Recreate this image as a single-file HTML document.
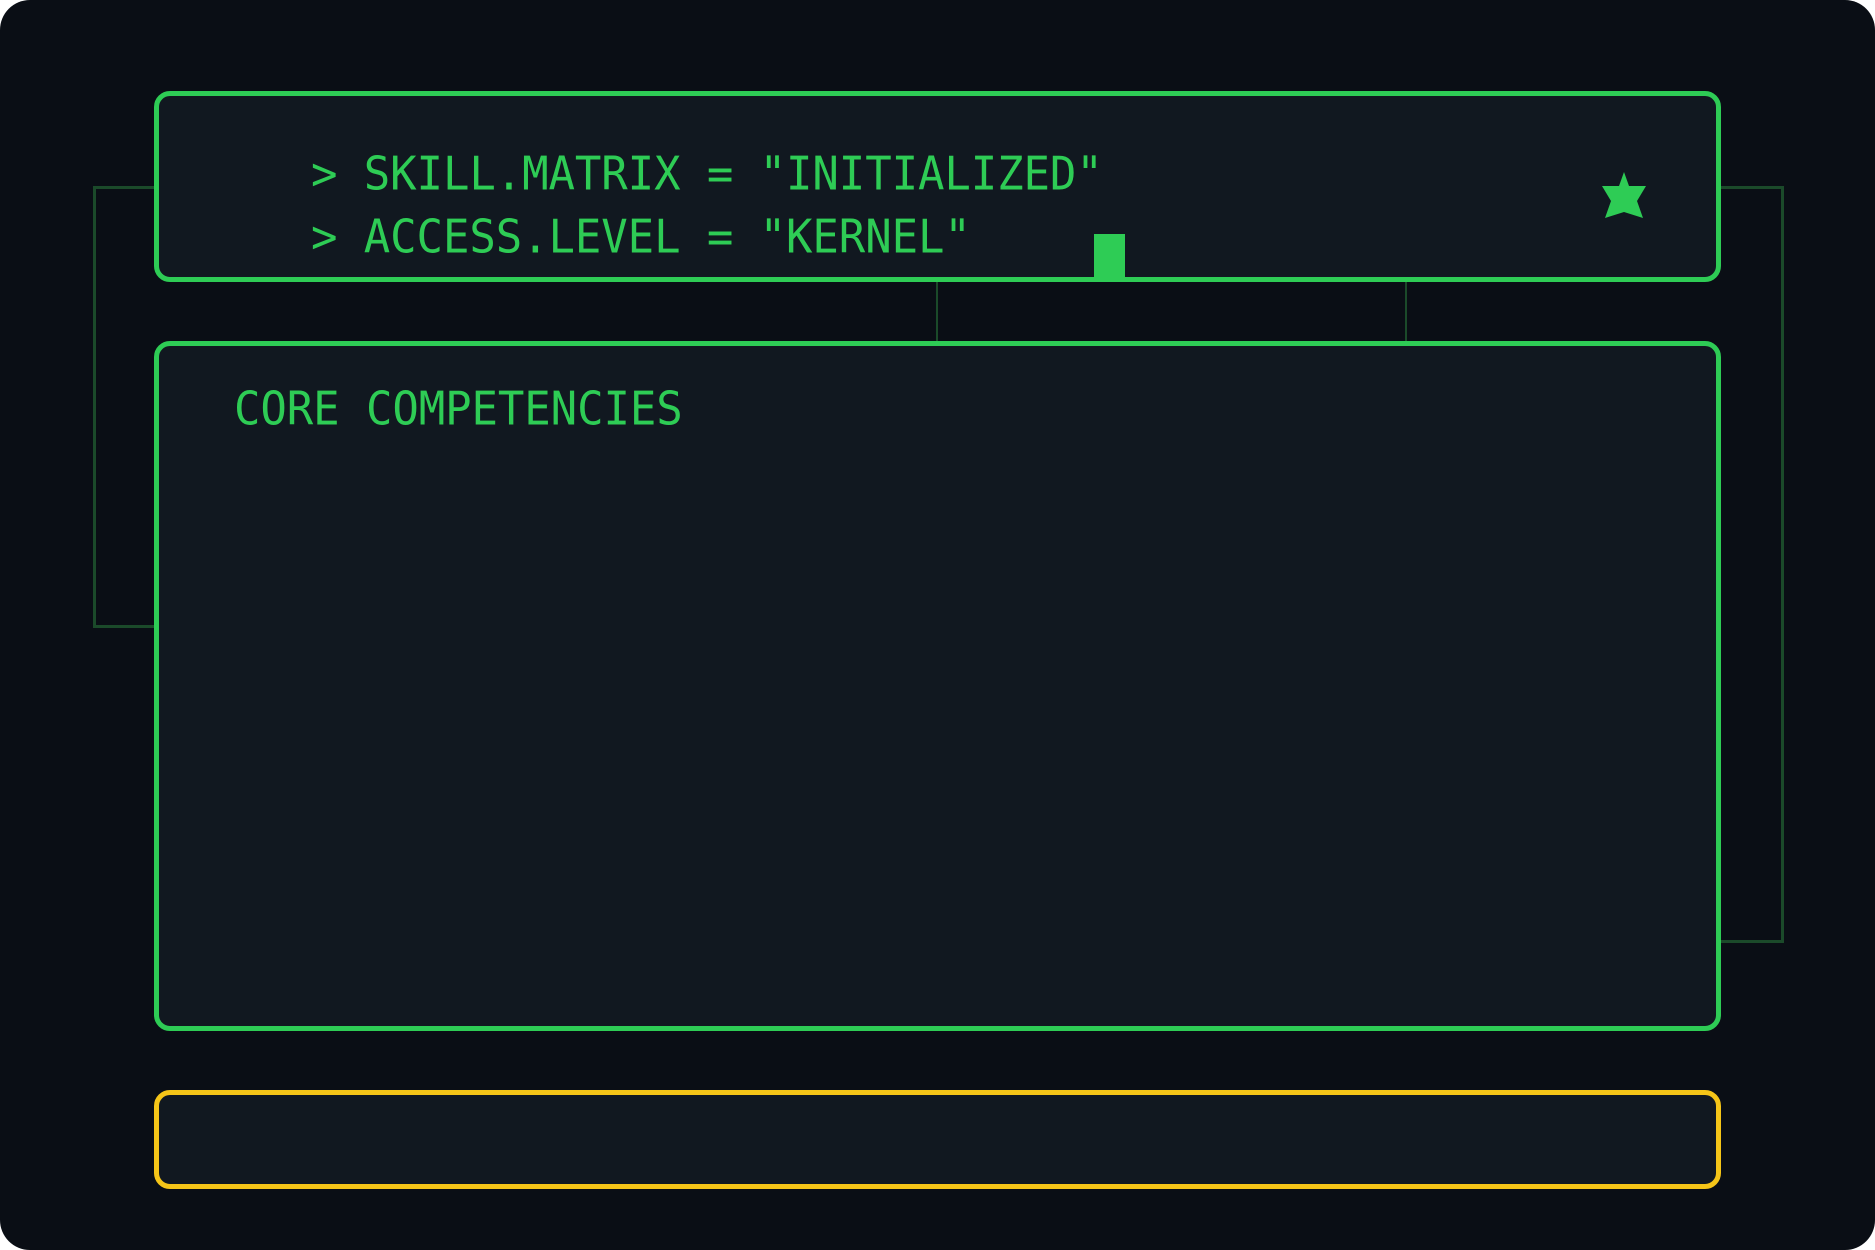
<!DOCTYPE html>
<html><head><meta charset="utf-8"><style>
html,body{margin:0;padding:0;background:#fff;}
body{width:1875px;height:1250px;overflow:hidden;position:relative;}
.bg{position:absolute;left:0;top:0;width:1875px;height:1250px;background:#0a0e15;border-radius:30px;}
.box{position:absolute;box-sizing:border-box;background:#111820;border:5px solid #2ecc55;border-radius:16px;}
.t{position:absolute;font-family:"DejaVu Sans Mono","Liberation Mono",monospace;font-size:44px;color:#2ecc55;white-space:pre;line-height:1;transform-origin:0 100%;transform:scaleY(1.06);letter-spacing:-0.1px;}
.ln{position:absolute;border-color:#1b4a2a;border-style:solid;border-width:0;}
</style></head><body>
<div class="bg"></div>
<div class="ln" style="left:93px;top:186px;width:62px;height:436px;border-width:3px 0 3px 3px;"></div>
<div class="ln" style="left:1720px;top:186px;width:61px;height:751px;border-width:3px 3px 3px 0;"></div>
<div class="ln" style="left:936px;top:281px;height:62px;border-left-width:2px;"></div>
<div class="ln" style="left:1405px;top:281px;height:62px;border-left-width:2px;"></div>
<div class="box" style="left:154px;top:91px;width:1567px;height:191px;"></div>
<div class="t" style="left:311px;top:154px;">&gt; SKILL.MATRIX = "INITIALIZED"</div>
<div class="t" style="left:311px;top:217px;">&gt; ACCESS.LEVEL = "KERNEL"</div>
<div style="position:absolute;left:1094px;top:234px;width:31px;height:46px;background:#2ecc55;"></div>
<svg style="position:absolute;left:1600px;top:170px" width="48" height="52" viewBox="0 0 48 52"><polygon points="24,2 29,16 46,16 37,31 43,48 24,42 5,48 11,31 2,16 19,16" fill="#2ecc55"/></svg>
<div class="box" style="left:154px;top:341px;width:1567px;height:690px;"></div>
<div class="t" style="left:234px;top:389px;">CORE COMPETENCIES</div>
<div class="box" style="left:154px;top:1090px;width:1567px;height:99px;border-color:#f5c518;"></div>
</body></html>
